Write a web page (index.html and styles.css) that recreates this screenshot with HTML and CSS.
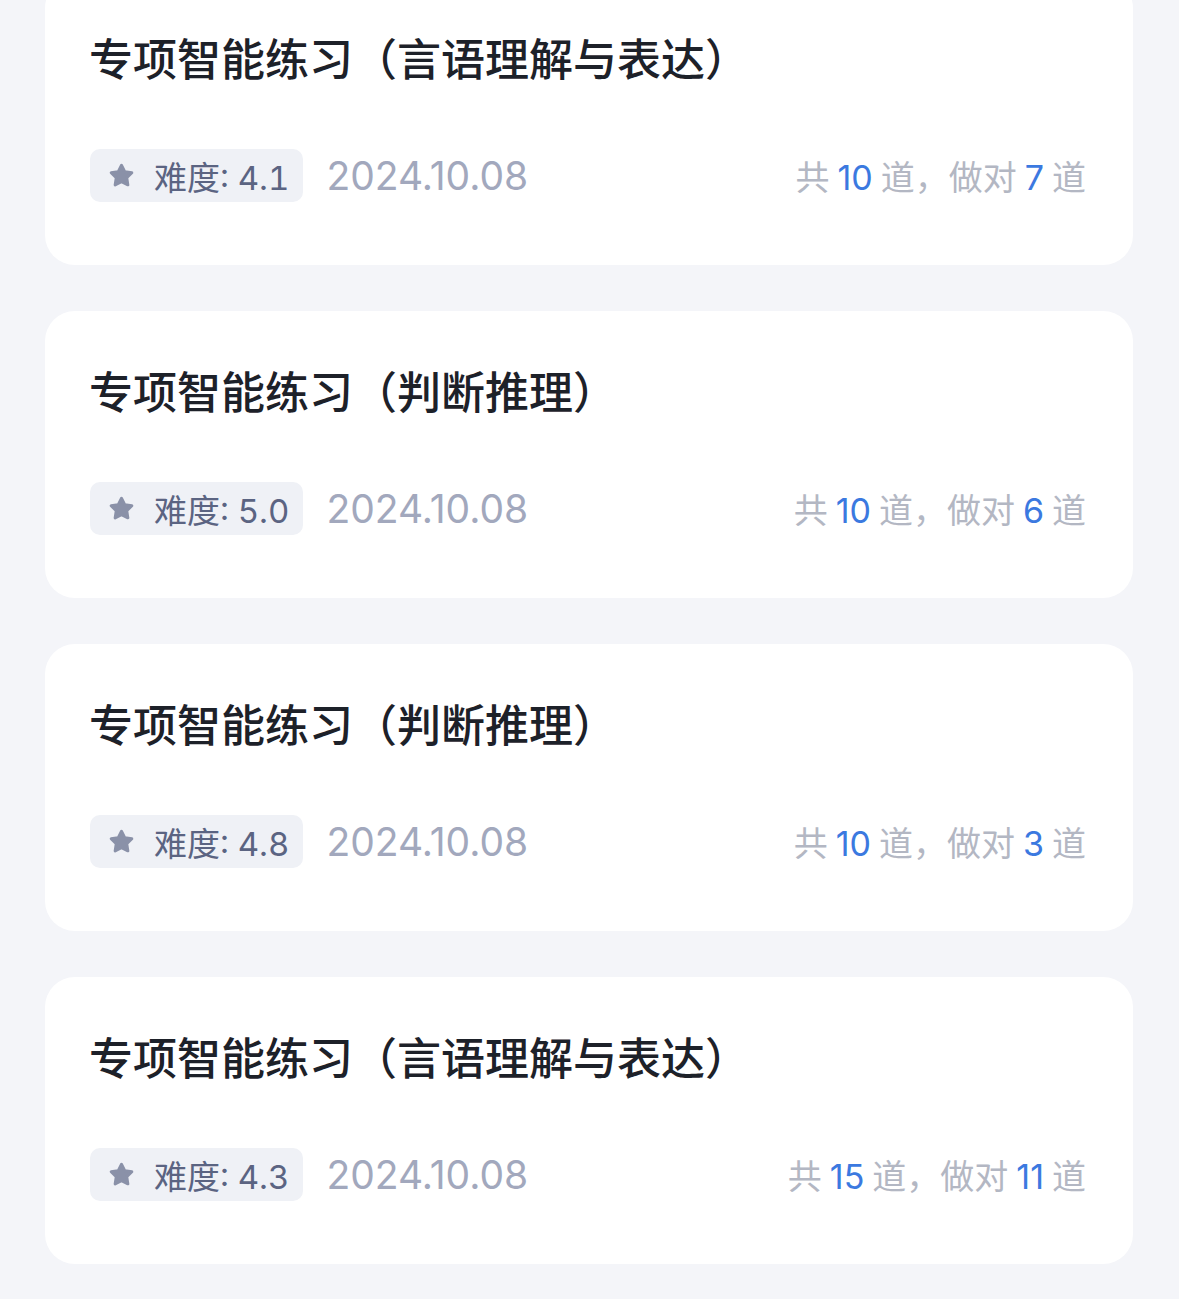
FILE: index.html
```html
<!DOCTYPE html>
<html lang="zh-CN">
<head>
    <meta charset="UTF-8">
    <meta name="viewport" content="width=device-width, initial-scale=1.0">
    <title>练习记录</title>
    <link rel="stylesheet" href="styles.css">
</head>
<body>

    <div class="record-list">
        <div class="record-card">
            <div class="record-title">专项智能练习（言语理解与表达）</div>
            <div class="record-meta">
                <span class="level-badge">
                    <svg class="star" viewBox="0 0 24 24"><polygon points="12,3.5 14.7,8.78 20.56,9.72 16.37,13.92 17.29,19.78 12,17.1 6.71,19.78 7.63,13.92 3.44,9.72 9.3,8.78"/></svg>
                    难度: 4.1
                </span>
                <span class="record-date">2024.10.08</span>
                <span class="record-score">共<b>10</b>道，做对<b>7</b>道</span>
            </div>
        </div>

        <div class="record-card">
            <div class="record-title">专项智能练习（判断推理）</div>
            <div class="record-meta">
                <span class="level-badge">
                    <svg class="star" viewBox="0 0 24 24"><polygon points="12,3.5 14.7,8.78 20.56,9.72 16.37,13.92 17.29,19.78 12,17.1 6.71,19.78 7.63,13.92 3.44,9.72 9.3,8.78"/></svg>
                    难度: 5.0
                </span>
                <span class="record-date">2024.10.08</span>
                <span class="record-score">共<b>10</b>道，做对<b>6</b>道</span>
            </div>
        </div>

        <div class="record-card">
            <div class="record-title">专项智能练习（判断推理）</div>
            <div class="record-meta">
                <span class="level-badge">
                    <svg class="star" viewBox="0 0 24 24"><polygon points="12,3.5 14.7,8.78 20.56,9.72 16.37,13.92 17.29,19.78 12,17.1 6.71,19.78 7.63,13.92 3.44,9.72 9.3,8.78"/></svg>
                    难度: 4.8
                </span>
                <span class="record-date">2024.10.08</span>
                <span class="record-score">共<b>10</b>道，做对<b>3</b>道</span>
            </div>
        </div>

        <div class="record-card">
            <div class="record-title">专项智能练习（言语理解与表达）</div>
            <div class="record-meta">
                <span class="level-badge">
                    <svg class="star" viewBox="0 0 24 24"><polygon points="12,3.5 14.7,8.78 20.56,9.72 16.37,13.92 17.29,19.78 12,17.1 6.71,19.78 7.63,13.92 3.44,9.72 9.3,8.78"/></svg>
                    难度: 4.3
                </span>
                <span class="record-date">2024.10.08</span>
                <span class="record-score">共<b>15</b>道，做对<b>11</b>道</span>
            </div>
        </div>
    </div>

</body>
</html>
```

FILE: styles.css
```css
body {
    margin: 0;
    background-color: #f4f5f9;
    font-family: Inter, "Noto Sans CJK SC", sans-serif;
    color: #1f2329;
    overflow: hidden;
}
.record-list {
    display: flex;
    flex-direction: column;
    gap: 46px;
    padding: 0 46px 0 45px;
    margin-top: -22px;
}
.record-card {
    background-color: #fff;
    border-radius: 30px;
    height: 287px;
    box-sizing: border-box;
    padding: 49px 47px 0 45px;
}
.record-title {
    font-family: "Noto Sans CJK SC", sans-serif;
    font-size: 44px;
    font-weight: 500;
    line-height: 60px;
    color: #1d2129;
    margin-left: -1px;
}
.record-meta {
    display: flex;
    align-items: center;
    margin-top: 62px;
    height: 53px;
}
.level-badge {
    display: flex;
    align-items: center;
    height: 53px;
    padding: 0 14px 0 17px;
    background-color: #eff1f6;
    border-radius: 10px;
    font-size: 33px;
    font-variant-numeric: tabular-nums;
    color: #5b6482;
    box-sizing: border-box;
}
.star {
    width: 29px;
    height: 29px;
    fill: #8a91a8;
    stroke: #8a91a8;
    stroke-width: 2.4;
    stroke-linejoin: round;
    margin-right: 18px;
}
.record-date {
    margin-left: 23px;
    font-size: 39px;
    color: #a2a8bd;
}
.record-score {
    margin-left: auto;
    font-size: 34px;
    color: #b3b7c3;
}
.record-score b {
    font-weight: 400;
    color: #3b79e0;
    margin: 0 8px;
}
```
